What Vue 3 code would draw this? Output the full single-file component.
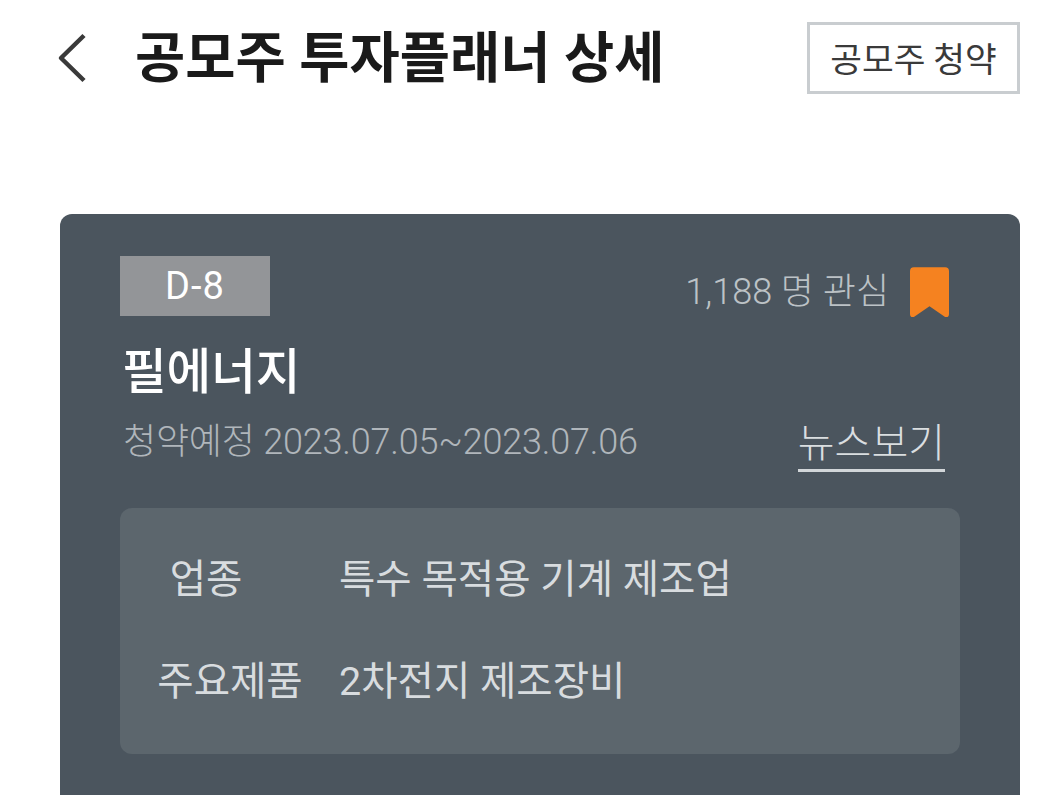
<script setup>
const rows = [
  { label: '업종', value: '특수 목적용 기계 제조업', short: true },
  { label: '주요제품', value: '2차전지 제조장비', short: false }
]
</script>

<template>
  <div class="page">
    <header class="top">
      <svg class="back" width="30" height="50" viewBox="0 0 30 50" fill="none">
        <path d="M27 2.5 L4 25 L27 47.5" stroke="#3a3a3a" stroke-width="4.5" stroke-linejoin="round" />
      </svg>
      <h1 class="title">공모주 투자플래너 상세</h1>
      <button class="apply">공모주 청약</button>
    </header>
    <section class="card">
      <div class="line1">
        <span class="badge">D-8</span>
        <div class="watch">
          <span>1,188 명 관심</span>
          <svg width="39" height="51" viewBox="0 0 40 52">
            <path d="M4 0 H36 A4 4 0 0 1 40 4 V48 Q40 52 36 51 L20 40 L4 51 Q0 52 0 48 V4 A4 4 0 0 1 4 0 Z" fill="#f58220" />
          </svg>
        </div>
      </div>
      <h2 class="name">필에너지</h2>
      <div class="line3">
        <span class="date">청약예정 2023.07.05~2023.07.06</span>
        <a class="news">뉴스보기</a>
      </div>
      <div class="info">
        <div v-for="r in rows" :key="r.label" class="row">
          <span class="label" :class="{ short: r.short }">{{ r.label }}</span>
          <span class="value">{{ r.value }}</span>
        </div>
      </div>
    </section>
  </div>
</template>

<style>
html, body { margin: 0; background: #fff; overflow: hidden; }
</style>

<style scoped>
.page {
  width: 1042px;
  height: 795px;
  overflow: hidden;
  font-family: Roboto, "Noto Sans CJK KR", sans-serif;
}
.top {
  display: flex;
  align-items: center;
  height: 116px;
  padding: 0 22px 0 57px;
  box-sizing: border-box;
}
.back { flex: none; }
.title {
  margin: 0 0 0 48px;
  flex: 1;
  font-size: 54.6px;
  line-height: 1;
  font-weight: 700;
  color: #1a1a1a;
}
.apply {
  width: 213px;
  height: 72px;
  box-sizing: border-box;
  border: 3px solid #c9cdd0;
  background: #fff;
  color: #3a3a3a;
  font: 400 34.5px "Noto Sans CJK KR", sans-serif;
  padding: 0 0 3px;
}
.card {
  margin: 98px 22px 0 60px;
  height: 600px;
  background: #4b555e;
  border-radius: 12px;
  padding: 42px 60px 0;
  box-sizing: border-box;
}
.line1 { display: flex; justify-content: space-between; align-items: center; height: 60px; }
.badge {
  width: 150px;
  height: 60px;
  background: #939598;
  color: #fff;
  font-size: 38px;
  letter-spacing: 1px;
  line-height: 60px;
  text-align: center;
}
.watch {
  display: flex;
  align-items: center;
  gap: 21px;
  margin: 12px 11px 0 0;
  color: #bcc2c6;
  font-size: 36px;
  font-weight: 300;
  line-height: 50px;
}
.name {
  margin: 25px 0 0 2px;
  font-size: 48.5px;
  line-height: 64px;
  font-weight: 500;
  color: #fff;
}
.line3 { display: flex; justify-content: space-between; align-items: flex-start; margin-top: 9px; }
.date {
  margin-left: 3px;
  font-size: 36px;
  font-weight: 300;
  letter-spacing: -0.2px;
  line-height: 56px;
  color: #b0b6bb;
}
.news {
  margin-right: 15px;
  font-size: 40px;
  font-weight: 300;
  line-height: 60px;
  height: 55px;
  color: #dadee0;
  border-bottom: 3px solid #d2d6d9;
}
.info {
  margin-top: 36px;
  height: 246px;
  background: #5c666d;
  border-radius: 12px;
  display: flex;
  flex-direction: column;
  gap: 48px;
  padding-top: 40px;
  box-sizing: border-box;
}
.row { display: flex; align-items: center; height: 54px; font-size: 39.5px; color: #d8dcdf; }
.label { width: 220px; box-sizing: border-box; text-align: center; flex: none; }
.label.short { padding-right: 48px; }
.value { margin-left: -1px; }
</style>
